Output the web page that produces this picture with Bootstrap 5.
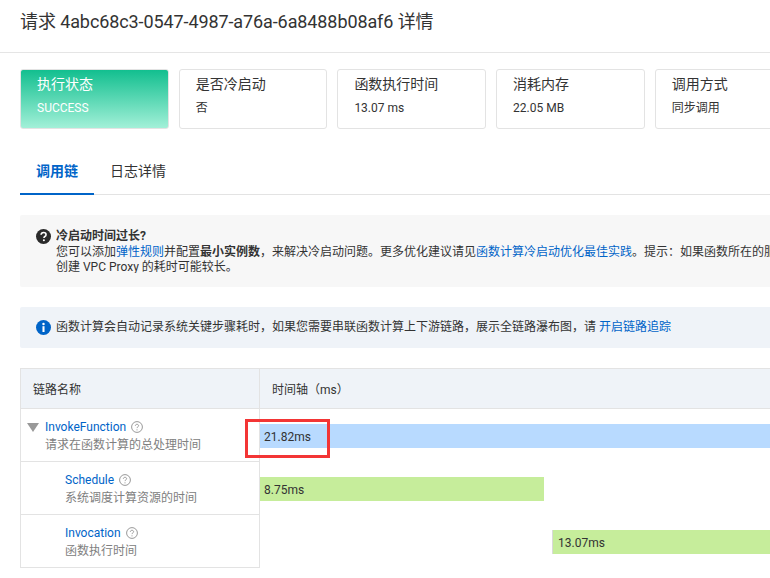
<!DOCTYPE html>
<html lang="zh-CN">
<head>
    <meta charset="UTF-8">
    <title>请求详情</title>
    <link rel="stylesheet" href="https://cdn.jsdelivr.net/npm/bootstrap@5.3.0/dist/css/bootstrap.min.css">
    <style>
        html, body { overflow: hidden; height: 578px; }
        body { width: 770px; color: #333; font-family: Roboto, "Noto Sans CJK SC", sans-serif; font-size: 12px; line-height: 16px; }
        a { color: #0064c8; text-decoration: none; }
        .page-head { height: 53px; padding: 9px 20px 0; border-bottom: 1px solid #e5e5e5; }
        .page-title { font-size: 18px; line-height: 26px; margin: 0; font-weight: 400; color: #333; white-space: nowrap; letter-spacing: -0.1px; }
        .stat-row { margin: 16px 0 0 20px; width: 800px; gap: 10px; }
        .stat-box { flex: 0 0 148.7px; height: 60px; padding: 6px 16px; border: 1px solid #e3e3e3; border-radius: 3px; background: #fff; }
        .stat-box:last-child { flex-basis: 170px; }
        .stat-box.is-ok { background: linear-gradient(#12bf8f, #a2f0d8); color: #fff; }
        .stat-name { font-size: 14px; line-height: 16px; margin-bottom: 8px; }
        .stat-val { font-size: 12px; line-height: 16px; }
        .tab-bar { margin: 24px 0 0 20px; height: 42px; border-bottom: 1px solid #e3e3e3; }
        .tab-item { padding: 10px 16px 0; height: 42px; font-size: 14px; line-height: 16px; color: #333; }
        .tab-item.on { color: #0064c8; font-weight: 700; border-bottom: 2px solid #0064c8; }
        .tip-box { margin-left: 20px; width: 790px; background: #f7f7f7; border-radius: 2px; padding: 14px 16px; white-space: nowrap; gap: 5px; }
        .tip-cold { margin-top: 20px; height: 72px; }
        .tip-info { margin-top: 20px; height: 41px; padding-top: 13px; background: #eff3f8; }
        .tip-ico { flex: 0 0 15px; width: 15px; height: 15px; }
        .tip-text { line-height: 15.5px; overflow: hidden; }
        .tip-text b { font-weight: 700; }
        .trace-wrap { margin: 20px 0 0 20px; width: 770px; position: relative; }
        .trace-head { height: 41px; background: #eff3f8; border: 1px solid #e3e3e3; border-width: 1px 0; line-height: 42px; }
        .head-name { flex: 0 0 240px; padding-left: 12px; border-left: 1px solid #e3e3e3; border-right: 1px solid #e3e3e3; }
        .head-time { padding-left: 12px; }
        .trace-row { height: 53px; }
        .row-name { flex: 0 0 240px; height: 53px; border: 1px solid #e3e3e3; border-width: 0 1px 1px; padding: 10px 0 0 24px; color: #808080; white-space: nowrap; position: relative; line-height: 17.5px; }
        .row-name.sub { padding-left: 44px; }
        .row-name a { margin-right: 5px; }
        .help-ico { width: 12px; height: 12px; vertical-align: -2px; }
        .fold-ico { position: absolute; left: 6px; top: 14px; width: 12px; height: 9px; }
        .row-time { flex: 1 1 auto; padding-top: 15px; overflow: hidden; }
        .time-bar { height: 24px; line-height: 26px; padding-left: 4px; color: #333; white-space: nowrap; }
        .bar-blue { background: #b8daff; }
        .bar-green { background: #c6ed9b; }
        .bar-late { padding-left: 5px; border-left: 1px solid #d9d9d9; }
        .red-mark { position: absolute; left: 225px; top: 51px; width: 85px; height: 39px; border: 3px solid #f33535; }
    </style>
</head>
<body>
    <div class="page-head">
        <h1 class="page-title">请求 4abc68c3-0547-4987-a76a-6a8488b08af6 详情</h1>
    </div>

    <div class="stat-row d-flex">
        <div class="stat-box is-ok"><div class="stat-name">执行状态</div><div class="stat-val">SUCCESS</div></div>
        <div class="stat-box"><div class="stat-name">是否冷启动</div><div class="stat-val">否</div></div>
        <div class="stat-box"><div class="stat-name">函数执行时间</div><div class="stat-val">13.07 ms</div></div>
        <div class="stat-box"><div class="stat-name">消耗内存</div><div class="stat-val">22.05 MB</div></div>
        <div class="stat-box"><div class="stat-name">调用方式</div><div class="stat-val">同步调用</div></div>
    </div>

    <div class="tab-bar d-flex">
        <div class="tab-item on">调用链</div>
        <div class="tab-item">日志详情</div>
    </div>

    <div class="tip-box tip-cold d-flex">
        <svg class="tip-ico" viewBox="0 0 16 16"><circle cx="8" cy="8" r="8" fill="#2b2b2b"/><path d="M5.4 6.2C5.5 4.7 6.6 3.8 8.1 3.8c1.5 0 2.6.9 2.6 2.2 0 1-.5 1.5-1.3 2-.7.5-.9.8-.9 1.5" fill="none" stroke="#fff" stroke-width="1.7"/><circle cx="8.4" cy="12" r="1.1" fill="#fff"/></svg>
        <div class="tip-text">
            <b>冷启动时间过长?</b><br>
            您可以添加<a href="#">弹性规则</a>并配置<b>最小实例数</b>，来解决冷启动问题。更多优化建议请见<a href="#">函数计算冷启动优化最佳实践</a>。提示：如果函数所在的服务配置了 VPC，<br>
            创建 VPC Proxy 的耗时可能较长。
        </div>
    </div>

    <div class="tip-box tip-info d-flex">
        <svg class="tip-ico" viewBox="0 0 16 16"><circle cx="8" cy="8" r="8" fill="#0064c8"/><circle cx="8" cy="4.2" r="1.3" fill="#fff"/><rect x="6.9" y="6.6" width="2.2" height="6.2" fill="#fff"/></svg>
        <div class="tip-text">函数计算会自动记录系统关键步骤耗时，如果您需要串联函数计算上下游链路，展示全链路瀑布图，请 <a href="#">开启链路追踪</a></div>
    </div>

    <div class="trace-wrap">
        <div class="trace-head d-flex">
            <div class="head-name">链路名称</div>
            <div class="head-time">时间轴（ms）</div>
        </div>
        <div class="trace-row d-flex">
            <div class="row-name">
                <svg class="fold-ico" viewBox="0 0 12 9"><path d="M0 0h12L6 9z" fill="#999"/></svg>
                <a href="#">InvokeFunction</a><svg class="help-ico" viewBox="0 0 12 12"><circle cx="6" cy="6" r="5.4" fill="none" stroke="#999"/><path d="M4.4 4.8c0-1 .7-1.5 1.6-1.5s1.6.5 1.6 1.4c0 1.2-1.6 1.2-1.6 2.4" fill="none" stroke="#999"/><circle cx="6" cy="8.8" r=".6" fill="#999"/></svg><br>请求在函数计算的总处理时间
            </div>
            <div class="row-time"><div class="time-bar bar-blue" style="width: 708px">21.82ms</div></div>
        </div>
        <div class="trace-row d-flex">
            <div class="row-name sub">
                <a href="#">Schedule</a><svg class="help-ico" viewBox="0 0 12 12"><circle cx="6" cy="6" r="5.4" fill="none" stroke="#999"/><path d="M4.4 4.8c0-1 .7-1.5 1.6-1.5s1.6.5 1.6 1.4c0 1.2-1.6 1.2-1.6 2.4" fill="none" stroke="#999"/><circle cx="6" cy="8.8" r=".6" fill="#999"/></svg><br>系统调度计算资源的时间
            </div>
            <div class="row-time"><div class="time-bar bar-green" style="width: 284px">8.75ms</div></div>
        </div>
        <div class="trace-row d-flex">
            <div class="row-name sub">
                <a href="#">Invocation</a><svg class="help-ico" viewBox="0 0 12 12"><circle cx="6" cy="6" r="5.4" fill="none" stroke="#999"/><path d="M4.4 4.8c0-1 .7-1.5 1.6-1.5s1.6.5 1.6 1.4c0 1.2-1.6 1.2-1.6 2.4" fill="none" stroke="#999"/><circle cx="6" cy="8.8" r=".6" fill="#999"/></svg><br>函数执行时间
            </div>
            <div class="row-time"><div class="time-bar bar-green bar-late" style="width: 424px; margin-left: 292px">13.07ms</div></div>
        </div>
        <div class="red-mark"></div>
    </div>

    <script src="https://cdn.jsdelivr.net/npm/bootstrap@5.3.0/dist/js/bootstrap.bundle.min.js"></script>
</body>
</html>
